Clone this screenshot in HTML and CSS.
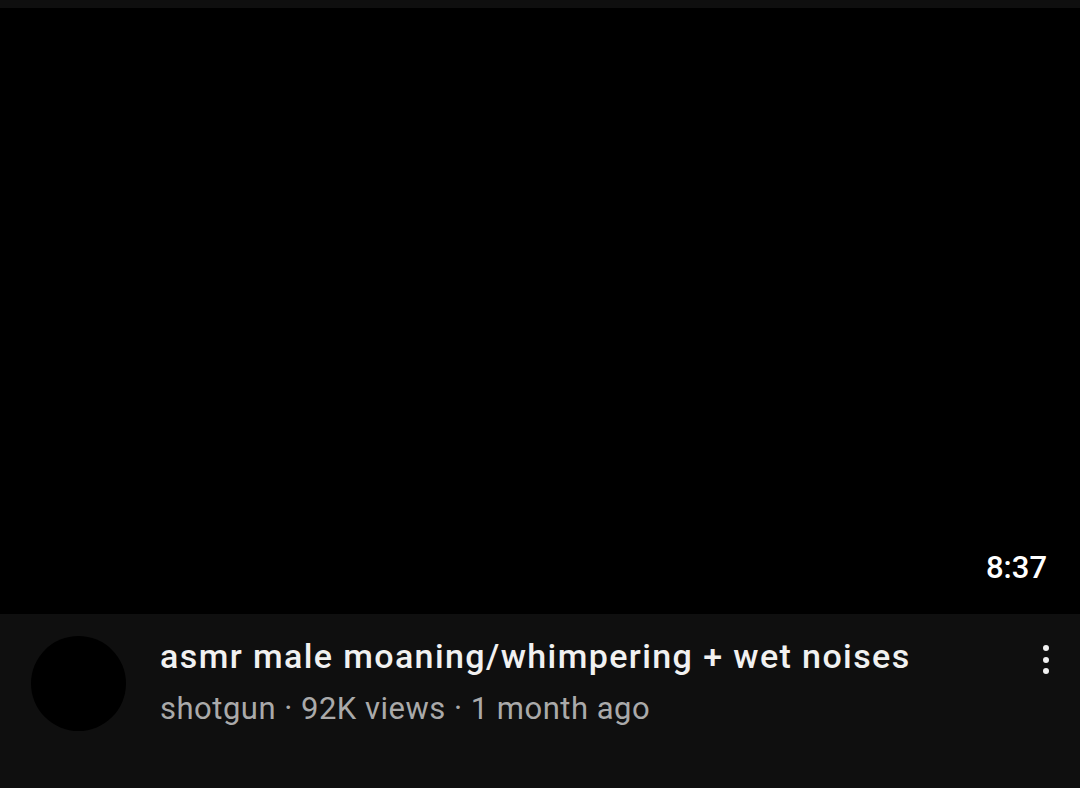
FILE: index.html
```html
<!DOCTYPE html>
<html>
<head>
<meta charset="utf-8">
<link rel="stylesheet" href="styles.css">
</head>
<body>
<div class="topbar"></div>
<div class="thumb">
  <span class="duration">8:37</span>
</div>
<div class="info">
  <div class="avatar"></div>
  <div class="text">
    <div class="title">asmr male moaning/whimpering + wet noises</div>
    <div class="meta">shotgun · 92K views · 1 month ago</div>
  </div>
  <div class="menu">
    <span class="dot"></span><span class="dot"></span><span class="dot"></span>
  </div>
</div>
</body>
</html>
```

FILE: styles.css
```css
html, body {
  margin: 0;
  padding: 0;
  background: #0f0f0f;
  font-family: Roboto, "Liberation Sans", sans-serif;
  width: 1080px;
  height: 788px;
  overflow: hidden;
}
.topbar {
  height: 8px;
  background: #0f0f0f;
}
.thumb {
  height: 606px;
  background: #000;
  display: flex;
  align-items: flex-end;
  justify-content: flex-end;
  box-sizing: border-box;
  padding: 0 33px 28px 0;
}
.duration {
  color: #fff;
  font-size: 31px;
  font-weight: 500;
  line-height: 36px;
}
.info {
  display: flex;
  align-items: flex-start;
  padding: 22px 0 0 31px;
}
.avatar {
  width: 95px;
  height: 95px;
  border-radius: 50%;
  background: #000;
  flex: none;
}
.text {
  flex: 1;
  padding-left: 34px;
}
.title {
  color: #f1f1f1;
  font-size: 34px;
  font-weight: 500;
  line-height: 40px;
  letter-spacing: 1.4px;
}
.meta {
  color: #aaaaaa;
  font-size: 31px;
  line-height: 40px;
  letter-spacing: 0.5px;
  margin-top: 13px;
}
.menu {
  display: flex;
  flex-direction: column;
  align-items: center;
  gap: 5.7px;
  padding: 9px 31px 0 0;
}
.dot {
  width: 6px;
  height: 6px;
  border-radius: 50%;
  background: #f1f1f1;
}
```
